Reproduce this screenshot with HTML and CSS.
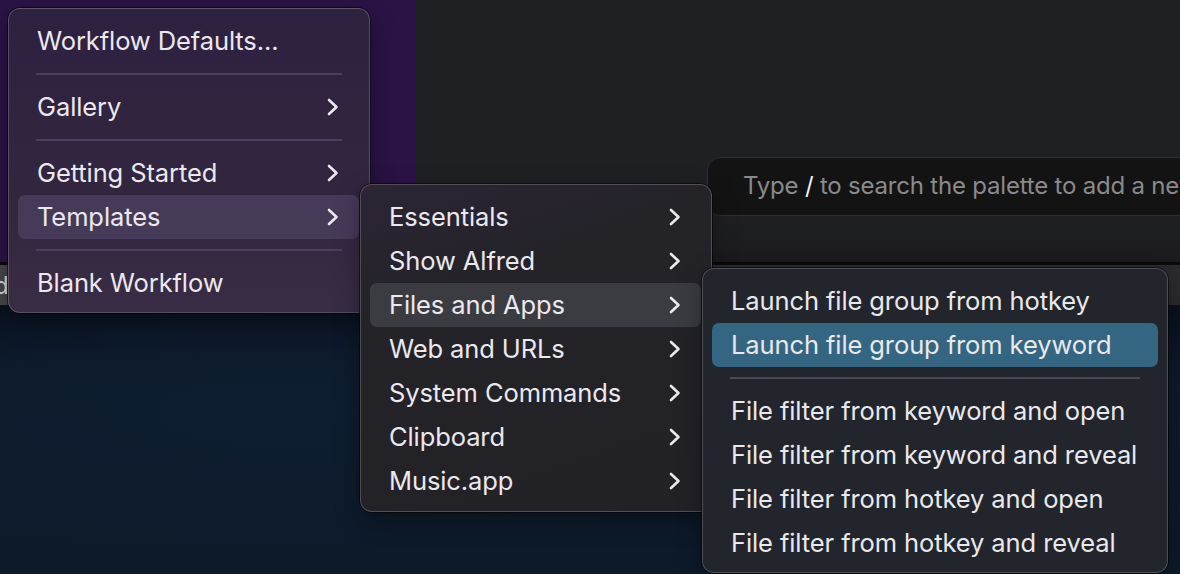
FILE: index.html
```html
<!DOCTYPE html>
<html>
<head>
<meta charset="utf-8">
<link rel="stylesheet" href="styles.css">
</head>
<body>
<div class="app">
  <div class="top">
    <div class="sidebar"></div>
    <div class="main">
      <div class="search"><span class="ph">Type </span><span class="slash">/</span><span class="ph"> to search the palette to add a new object</span></div>
    </div>
  </div>
  <div class="rule"></div>
  <div class="strip"><span class="tail">d</span></div>
  <div class="desktop"></div>
</div>

<div class="menu m1">
  <div class="item"><span>Workflow Defaults...</span></div>
  <div class="sep"></div>
  <div class="item"><span>Gallery</span><svg class="chev" viewBox="0 0 12 18"><polyline points="2,2 9.5,9 2,16"/></svg></div>
  <div class="sep"></div>
  <div class="item"><span>Getting Started</span><svg class="chev" viewBox="0 0 12 18"><polyline points="2,2 9.5,9 2,16"/></svg></div>
  <div class="item hl-purple"><span>Templates</span><svg class="chev" viewBox="0 0 12 18"><polyline points="2,2 9.5,9 2,16"/></svg></div>
  <div class="sep"></div>
  <div class="item"><span>Blank Workflow</span></div>
</div>

<div class="menu m2">
  <div class="item"><span>Essentials</span><svg class="chev" viewBox="0 0 12 18"><polyline points="2,2 9.5,9 2,16"/></svg></div>
  <div class="item"><span>Show Alfred</span><svg class="chev" viewBox="0 0 12 18"><polyline points="2,2 9.5,9 2,16"/></svg></div>
  <div class="item hl-grey"><span>Files and Apps</span><svg class="chev" viewBox="0 0 12 18"><polyline points="2,2 9.5,9 2,16"/></svg></div>
  <div class="item"><span>Web and URLs</span><svg class="chev" viewBox="0 0 12 18"><polyline points="2,2 9.5,9 2,16"/></svg></div>
  <div class="item"><span>System Commands</span><svg class="chev" viewBox="0 0 12 18"><polyline points="2,2 9.5,9 2,16"/></svg></div>
  <div class="item"><span>Clipboard</span><svg class="chev" viewBox="0 0 12 18"><polyline points="2,2 9.5,9 2,16"/></svg></div>
  <div class="item"><span>Music.app</span><svg class="chev" viewBox="0 0 12 18"><polyline points="2,2 9.5,9 2,16"/></svg></div>
</div>

<div class="menu m3">
  <div class="item"><span>Launch file group from hotkey</span></div>
  <div class="item hl-blue"><span>Launch file group from keyword</span></div>
  <div class="sep"></div>
  <div class="item"><span>File filter from keyword and open</span></div>
  <div class="item"><span>File filter from keyword and reveal</span></div>
  <div class="item"><span>File filter from hotkey and open</span></div>
  <div class="item"><span>File filter from hotkey and reveal</span></div>
</div>
</body>
</html>
```

FILE: styles.css
```css
* { box-sizing: border-box; }
html, body {
  margin: 0;
  padding: 0;
  width: 1180px;
  height: 574px;
  overflow: hidden;
  background: #0e1a2a;
  font-family: Inter, "Noto Sans", "Liberation Sans", sans-serif;
}
body { position: relative; }

.app {
  display: grid;
  grid-template-rows: 262px 3px 40px 1fr;
  width: 1180px;
  height: 574px;
}
.top {
  display: grid;
  grid-template-columns: 416px 1fr;
}
.sidebar { background: #2b1346; }
.main {
  background: linear-gradient(180deg, #1f2023 0%, #1f2023 80%, #1b1b1d 100%);
  overflow: hidden;
  padding-top: 157px;
  padding-left: 291px;
}
.search {
  width: 700px;
  height: 59px;
  background: #131313;
  border: 1px solid #303032;
  border-radius: 13px;
  padding-left: 35px;
  padding-bottom: 2px;
  display: flex;
  align-items: center;
  white-space: nowrap;
  font-size: 24px;
  letter-spacing: -0.2px;
}
.ph { color: #8a8a8c; white-space: pre; }
.slash { color: #f2f2f2; }
.rule { background: #0b0b0c; }
.strip {
  background: linear-gradient(90deg, #48484a 0px, #2d2d2f 420px, #2b2b2d 100%);
  overflow: hidden;
  display: flex;
  align-items: center;
}
.tail {
  color: #d8d8d8;
  font-size: 24px;
  margin-left: -6px;
}
.desktop {
  background:
    radial-gradient(ellipse at 30% 40%, #0f1d31 0%, rgba(14,26,42,0) 60%),
    linear-gradient(180deg, #08111d 0%, #0e1b2c 30%, #0d1a2a 100%);
}

.menu {
  position: absolute;
  display: flex;
  flex-direction: column;
  border: 1px solid rgba(255,255,255,0.2);
  border-radius: 12px;
  box-shadow: 0 0 0 1px rgba(0,0,0,0.55), 0 8px 24px rgba(0,0,0,0.35);
  color: #ebe8ee;
  font-size: 25.5px;
  letter-spacing: -0.1px;
}
.item {
  height: 44px;
  flex: none;
  display: flex;
  align-items: center;
  justify-content: space-between;
  border-radius: 7px;
  white-space: nowrap;
  padding-bottom: 1px;
}
.chev {
  width: 12px;
  height: 18px;
  flex: none;
}
.chev polyline {
  fill: none;
  stroke: #ebe8ee;
  stroke-width: 2.6;
  stroke-linecap: round;
  stroke-linejoin: round;
}
.sep {
  height: 22px;
  flex: none;
  display: flex;
  align-items: center;
}
.sep::before {
  content: "";
  display: block;
  width: 100%;
  height: 2px;
}

.m1 {
  left: 8px;
  top: 8px;
  width: 362px;
  height: 305px;
  padding: 10px 10px 8px 9px;
  background: linear-gradient(180deg, #2d2140 0%, #32263f 60%, #382d45 100%);
}
.m1 .item { padding-left: 19px; padding-right: 20px; }
.m1 .sep { padding: 0 17px 0 18px; }
.m1 .sep::before { background: #4b3e5e; }
.hl-purple { background: #463a59; }

.m2 {
  left: 360px;
  top: 184px;
  width: 352px;
  height: 328px;
  padding: 10px 10px 8px 9px;
  background: linear-gradient(160deg, #2b2535 0%, #242328 30%, #222226 100%);
}
.m2 .item { padding-left: 19px; padding-right: 20px; }
.hl-grey { background: #3b3c41; }

.m3 {
  left: 702px;
  top: 268px;
  width: 466px;
  height: 305px;
  padding: 10px 9px 7px 9px;
  background: #22252b;
  color: #e9e9ec;
}
.m3 .item { padding-left: 19px; padding-right: 20px; }
.m3 .sep { padding: 0 18px 0 18px; }
.m3 .sep::before { background: #474a51; }
.hl-blue { background: #356681; }
```
